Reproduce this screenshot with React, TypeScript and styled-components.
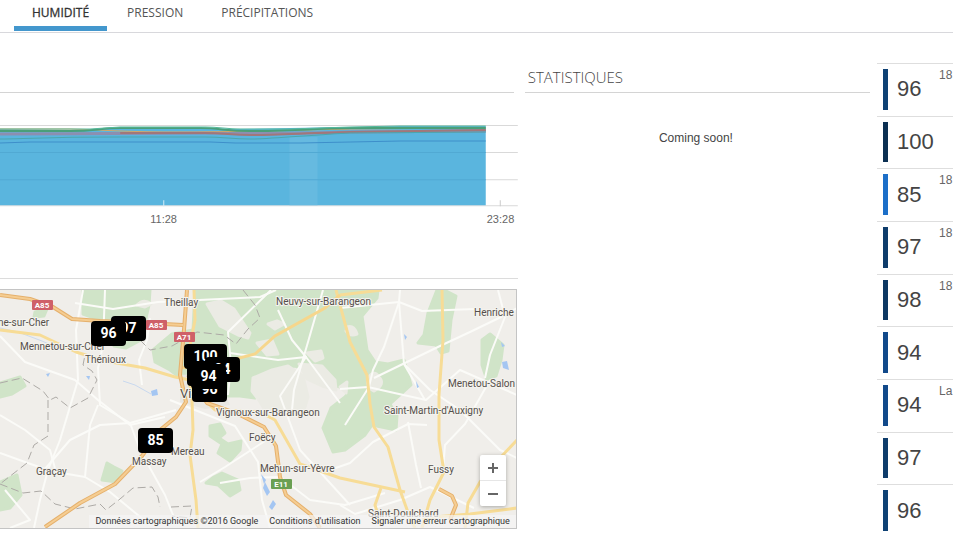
import React, { useState } from "react";
import styled, { createGlobalStyle } from "styled-components";

const GlobalStyle = createGlobalStyle`
  * { box-sizing: border-box; }
  body {
    margin: 0;
    background: #fff;
    color: #444;
    font-family: "Liberation Sans", Arial, sans-serif;
    font-size: 12px;
    overflow: hidden;
  }
`;

const TabBar = styled.nav`
  display: flex;
  gap: 2px;
  height: 33px;
  padding-left: 14px;
  border-bottom: 1px solid #d8d8dc;
`;

const Tab = styled.button<{ $active: boolean }>`
  height: 31px;
  padding: 0 18px;
  border: 0;
  border-bottom: ${(p) => (p.$active ? "5px solid #4397cd" : "5px solid transparent")};
  background: none;
  color: ${(p) => (p.$active ? "#333" : "#555")};
  font: 12px/26px "Open Sans", sans-serif;
  -webkit-text-stroke: ${(p) => (p.$active ? "0.3px #333" : "0")};
`;

const Page = styled.main`
  display: grid;
  grid-template-columns: minmax(0, 3fr) minmax(0, 2fr) 76px;
  column-gap: 7px;
  align-items: start;
`;

const ChartPanel = styled.section`
  border-bottom: 1px solid #dcdcdc;
  padding-bottom: 49px;
`;

const PanelHeader = styled.header`
  height: 60px;
  padding: 32px 3px 0;
  border-bottom: 1px solid #d4d4d4;
`;

const ChartHeader = styled(PanelHeader)`
  margin-right: 4px;
`;

const Title = styled.h2`
  margin: 0;
  color: #444;
  font: 300 15px/24px "Open Sans", sans-serif;
`;

const ChartSvg = styled.svg`
  display: block;
  width: 100%;
  height: 136px;
  text {
    font: 11px "Liberation Sans", Arial, sans-serif;
    fill: #666;
  }
`;

const Notice = styled.p`
  margin: 36px 3px 0 0;
  text-align: center;
  line-height: 18px;
`;

const MapFrame = styled.section`
  position: relative;
  height: 240px;
  margin: 10px 1px 0 0;
  overflow: hidden;
  border: 1px solid #c4c4c4;
  border-left: 0;
  background: #f0eeea;
`;

const MapSvg = styled.svg`
  display: block;
  width: 100%;
  height: 238px;
`;

const Marker = styled.button<{ $x: number; $y: number; $wide?: boolean }>`
  position: absolute;
  left: ${(p) => p.$x}px;
  top: ${(p) => p.$y}px;
  width: ${(p) => (p.$wide ? 43 : 35)}px;
  height: 25px;
  padding: 0;
  border: 0;
  border-radius: 4px;
  background: #000;
  color: #fff;
  font: 700 14px/25px Roboto, sans-serif;
  text-align: center;
`;

const ZoomControl = styled.div`
  position: absolute;
  right: 10px;
  bottom: 22px;
  display: grid;
  width: 26px;
  border-radius: 2px;
  background: #fff;
  box-shadow: 0 1px 4px rgba(0, 0, 0, 0.3);
`;

const ZoomButton = styled.button`
  display: grid;
  place-items: center;
  height: 25px;
  padding: 0;
  border: 0;
  background: none;
  & + & {
    border-top: 1px solid #e6e6e6;
    height: 26px;
  }
`;

const Credits = styled.footer`
  position: absolute;
  right: 0;
  bottom: 0;
  display: flex;
  gap: 11px;
  padding: 0 6px;
  background: rgba(245, 245, 245, 0.7);
  color: #333;
  font: 9px/13px Roboto, sans-serif;
  white-space: nowrap;
`;

const CreditLink = styled.a`
  color: inherit;
  text-decoration: none;
`;

const StationList = styled.ul`
  display: grid;
  grid-auto-rows: 1fr;
  height: calc(100vh - 62px);
  min-height: 474px;
  margin: 30px 0 0;
  padding: 0;
  list-style: none;
`;

const Station = styled.li`
  display: grid;
  grid-template-columns: 5px 51px auto;
  padding: 5px 0 6px 6px;
  overflow: hidden;
  border-top: 1px solid #dedede;
`;

const Level = styled.span<{ $color: string }>`
  background: ${(p) => p.$color};
`;

const Reading = styled.strong`
  align-self: center;
  padding-left: 9px;
  color: #444;
  font-size: 22px;
  font-weight: 400;
  line-height: 24px;
`;

const Note = styled.span`
  color: #666;
  font-size: 12px;
  line-height: 13px;
`;

const tabs = ["HUMIDITÉ", "PRESSION", "PRÉCIPITATIONS"];

const stations = [
  { value: 96, color: "#0e4174", note: "18" },
  { value: 100, color: "#0b2f52", note: "" },
  { value: 85, color: "#1c6fc8", note: "18" },
  { value: 97, color: "#0e3c6b", note: "18" },
  { value: 98, color: "#0d3863", note: "18" },
  { value: 94, color: "#11498a", note: "" },
  { value: 94, color: "#11498a", note: "La" },
  { value: 97, color: "#0e3c6b", note: "" },
  { value: 96, color: "#0e4174", note: "" },
];

const markers = [
  { value: 97, x: 111, y: 26 },
  { value: 96, x: 91, y: 31 },
  { value: 96, x: 192, y: 87 },
  { value: 100, x: 184, y: 54, wide: true },
  { value: 97, x: 187, y: 71 },
  { value: 94, x: 205, y: 67 },
  { value: 94, x: 191, y: 74 },
  { value: 85, x: 138, y: 138 },
];

const towns: [number, number, string][] = [
  [164, 306, "Theillay"],
  [276, 305, "Neuvy-sur-Barangeon"],
  [474, 316, "Henriche"],
  [-2, 326, "ne-sur-Cher"],
  [20, 350, "Mennetou-sur-Cher"],
  [85, 363, "Thénioux"],
  [448, 387, "Menetou-Salon"],
  [384, 414, "Saint-Martin-d'Auxigny"],
  [216, 416, "Vignoux-sur-Barangeon"],
  [249, 441, "Foëcy"],
  [171, 455, "Mereau"],
  [132, 465, "Massay"],
  [36, 475, "Graçay"],
  [260, 472, "Mehun-sur-Yèvre"],
  [428, 473, "Fussy"],
  [368, 517, "Saint-Doulchard"],
];

const forests = [
  "M83 290H150L149 305L141 340L126 348L114 346L105 322L83 314Z",
  "M195 290H378L377 298L362 316L367 350L375 362L388 364L404 360L411 385L390 404L397 416L396 430L372 425L365 435L345 450L333 452L323 428L331 408L345 397L350 390L330 384L312 372L295 366L271 370L255 380L250 392L255 398L240 396L228 396L190 385L170 370L155 362L153 350L172 334L193 330Z",
  "M437 290L444 290L456 296L451 320L448 351L441 353L436 345L418 343L424 335L428 313Z",
  "M482 340L490 334L503 345L501 360L496 376L487 380L482 365Z",
  "M107 463L114 467L122 471L117 482L102 480Z",
  "M0 482L17 475L21 495L10 508L0 510Z",
  "M0 383L20 377L25 386L12 394L0 397Z",
  "M35 312L47 309L44 316L34 317Z",
  "M210 426L220 424L225 433L219 438L228 444L241 441L240 450L230 461L218 453L222 444L210 436Z",
  "M214 477L222 473L238 480L240 490L230 496L218 485L206 483Z",
];

const clearings = [
  "M207 304L221 301L234 309L250 333L248 338L238 335L220 326Z",
  "M268 324L277 321L284 324L275 329Z",
  "M257 343L272 340L278 354L267 355Z",
  "M137 305Q144 298 151 304L145 307Z",
  "M253 378L272 370L288 366L303 376L308 397L304 410L265 410L258 399L252 391Z",
  "M307 353L321 351L323 358L315 361Z",
  "M299 364L322 366L335 380L336 390L322 386L307 379Z",
  "M340 387L347 382L346 393Z",
  "M347 327Q354 325 357 334Q350 337 346 331Z",
  "M368 378Q374 369 379 377Q386 384 374 391Q366 388 368 378Z",
];

const localRoads = [
  "M83 290L76 330L78 380L60 440L48 470L40 500L34 528",
  "M105 290L103 345L98 368L100 405L130 423L140 450",
  "M0 336L25 362L50 371L75 380L98 400L130 425L165 417",
  "M0 415L25 430L50 450L56 472L85 477L110 492L150 525",
  "M0 453L25 462L45 469L70 440L100 425L130 423L176 410",
  "M85 477L90 425L98 405",
  "M140 450L165 495L175 520",
  "M75 303L113 309L158 302L260 297L276 290",
  "M150 318L147 340L139 360L142 385",
  "M271 290L228 332L231 365L228 395",
  "M323 290L308 342L294 390L292 410",
  "M278 310L292 340L306 357L280 396L300 450L350 505",
  "M230 353L278 360L306 357L340 403",
  "M170 400L235 426L258 462L262 500L270 528",
  "M200 482L225 467L265 441",
  "M220 483L250 478L280 477",
  "M400 290L399 302L384 347L373 370L369 387L345 425",
  "M340 308L399 302L422 311L475 309",
  "M399 302L404 364L425 400",
  "M374 378L440 346L470 332L501 317L517 308",
  "M498 290L505 317L490 355L485 378",
  "M404 364L430 390L460 410L500 450L517 458",
  "M340 389L368 387L390 392L426 400L460 370L517 395",
  "M427 425L408 424L373 442L350 463L330 470",
  "M408 422L416 465L421 488",
  "M490 380L465 424L445 445L443 470",
  "M340 505L355 514L400 500L430 487L474 508",
  "M5 490L30 520L10 528",
  "M280 477L310 500L345 505L385 493",
];

const mainRoads = [
  "M0 330L40 335L76 352L105 361L145 368L175 377L190 380",
  "M194 290L195 320L188 355L192 400L193 430L190 455L196 500L198 528",
  "M340 295L382 290",
  "M336 290L350 342L367 375L370 404L374 427L388 447L400 490L410 518L415 528",
  "M442 290L443 340L439 395L439 440L444 472L430 500L422 528",
  "M189 385L215 410L260 412L275 420L300 464L340 478L405 492",
  "M381 488L375 505L381 525",
  "M517 440L500 458L480 482L468 503L465 528",
  "M422 518L470 514L517 508",
];

const motorways =
  "M0 295L30 299L53 307L72 319L100 321L145 323L183 325M187 290L184 330L180 375L186 402L176 417L160 430L142 456L115 484L80 503L45 527M188 375L207 403L238 414L264 427L276 446L280 477L286 495L310 514L320 528M439 489L452 496L456 505L450 520";

const borders = [
  "M243 290L255 305L260 318L248 329L236 344L224 335L197 332L172 346L150 350L140 340",
  "M0 383L22 378L43 391L50 400L56 397L70 408L88 398L97 380L92 371L83 365L85 355",
  "M48 400L48 436L34 445L27 463L0 484",
  "M0 484L23 493L41 491L55 504L75 509L100 504L106 510L120 499L133 488L152 487L158 497L160 507",
  "M171 507L192 506L190 518L172 516",
];

const lakes = [
  "M151 391L157 389L158 395L152 396Z",
  "M86 376L90 376L89 380Z",
  "M46 374L50 373L48 377Z",
  "M404 334L407 337L405 340Z",
  "M502 362L507 361L509 370L503 368Z",
  "M501 342L505 346L502 347Z",
  "M261 474L266 480L264 484Z",
  "M265 482L270 492L267 496L263 488Z",
  "M273 500L276 504L272 510L269 507Z",
  "M416 381L419 387L417 388Z",
];

const shields: [number, number, string, string][] = [
  [32, 300, "A85", "#cf6068"],
  [146, 320, "A85", "#cf6068"],
  [174, 332, "A71", "#cf6068"],
  [271, 479, "E11", "#6a9f52"],
];

function HumidityChart() {
  return (
    <ChartSvg viewBox="0 93 517 136" preserveAspectRatio="xMinYMin slice" role="img" aria-label="Humidité">
      <path d="M0 125.500H517M0 152.500H517M0 179.500H517M0 205.500H517" stroke="#d9d9d9" fill="none" />
      <path d="M0 129L70 130L120 128L205 128L235 129L290 128L350 127L400 126L485 126V205H0Z" fill="#5ab5de" />
      <rect x="289" y="137" width="28" height="68" fill="#66bae0" />
      <path d="M0 152.500H485M0 179.500H485" stroke="#51a9d3" fill="none" />
      <g fill="none">
        <path d="M0 134C70 134 120 133 205 133S290 134 350 132L485 131" stroke="#8c8fb0" strokeWidth="3" />
        <path d="M0 129L70 129C110 130 130 132 180 132S300 130 350 129L485 128" stroke="#d4a765" strokeWidth="1" />
        <path d="M0 131H70C95 131 100 128 120 128H200C220 128 225 131 250 131S310 129 350 128L485 128" stroke="#4a9f79" strokeWidth="2" />
        <path d="M120 133H205C225 133 230 135 250 135S310 133 350 132L485 130" stroke="#a1777a" strokeWidth="2" />
        <path d="M0 139C40 138 60 137 120 137H205C225 137 230 139 250 139S310 135 350 133L485 132" stroke="#4ba6ad" strokeWidth="1" />
        <path d="M0 129H90L120 127H205C220 127 225 129 240 129H290L350 127L400 126H485" stroke="#56b79b" strokeWidth="1" />
        <path d="M0 143L30 142H210L235 143H300L350 142L400 141H485" stroke="#3e8fca" strokeWidth="1" />
      </g>
      <path d="M163.500 200V206" stroke="#d5edf7" />
      <path d="M499.500 200V206" stroke="#ccc" />
      <text x="150" y="223">11:28</text>
      <text x="486" y="223">23:28</text>
    </ChartSvg>
  );
}

function Terrain() {
  return (
    <MapSvg viewBox="0 290 517 238" preserveAspectRatio="xMinYMin slice" role="img" aria-label="Carte des stations">
      <rect y="290" width="517" height="238" fill="#f0eeea" />
      <g fill="#d0e4c8" stroke="#d0e4c8" strokeWidth="3" strokeLinejoin="round">
        {forests.map((d) => <path key={d} d={d} />)}
      </g>
      <g fill="#ebebe4" stroke="#ebebe4" strokeWidth="3" strokeLinejoin="round">
        {clearings.map((d) => <path key={d} d={d} />)}
      </g>
      <path d="M180 375L199 374L225 394L230 405L205 409L180 402Z" fill="#e8e7e2" />
      <g fill="none" stroke="#fbfbf8" strokeWidth="2" strokeLinejoin="round">
        {localRoads.map((d) => <path key={d} d={d} />)}
      </g>
      <path d="M0 328L18 332L42 341L60 349M123 381L135 385L151 394" fill="none" stroke="#c9d9ef" strokeWidth="1" />
      <g fill="#a4c6f2">{lakes.map((d) => <path key={d} d={d} />)}</g>
      <g fill="none" stroke="#adaaa6" strokeWidth="1" strokeDasharray="8 4">
        {borders.map((d) => <path key={d} d={d} />)}
      </g>
      <g fill="none" stroke="#f7dc96" strokeWidth="3" strokeLinejoin="round">
        {mainRoads.map((d) => <path key={d} d={d} />)}
      </g>
      <path d="M180 368L217 364L255 354L275 336L325 308L340 295" fill="none" stroke="#f6d68c" strokeWidth="3" />
      <g fill="none" strokeLinejoin="round">
        <path d={motorways} stroke="#e5b06c" strokeWidth="4" />
        <path d={motorways} stroke="#f5cd92" strokeWidth="2" />
      </g>
      {shields.map(([x, y, label, fill]) => (
        <g key={`${label}${x}`}>
          <rect x={x} y={y} width="21" height="10" rx="1" fill={fill} />
          <text x={x + 10} y={y + 8} textAnchor="middle" fill="#fff" fontFamily="Roboto, sans-serif" fontSize="8" fontWeight="700">{label}</text>
        </g>
      ))}
      <g fill="#554f4b" stroke="#f4f3ee" strokeWidth="2" paintOrder="stroke" fontFamily="Roboto, sans-serif" fontSize="10">
        {towns.map(([x, y, name]) => <text key={name} x={x} y={y}>{name}</text>)}
        <text x="180" y="398" fontSize="13">Vierzon</text>
      </g>
    </MapSvg>
  );
}

export default function App() {
  const [active, setActive] = useState(tabs[0]);
  return (
    <>
      <GlobalStyle />
      <TabBar>
        {tabs.map((tab) => (
          <Tab key={tab} $active={tab === active} onClick={() => setActive(tab)}>{tab}</Tab>
        ))}
      </TabBar>
      <Page>
        <div>
          <ChartPanel>
            <ChartHeader />
            <HumidityChart />
          </ChartPanel>
          <MapFrame>
            <Terrain />
            {markers.map((m) => (
              <Marker key={`${m.x}-${m.y}`} $x={m.x} $y={m.y} $wide={m.wide}>{m.value}</Marker>
            ))}
            <ZoomControl>
              <ZoomButton aria-label="Zoom avant">
                <svg width="10" height="10" viewBox="0 0 10 10"><path d="M5 0V10M0 5H10" stroke="#666" strokeWidth="2" /></svg>
              </ZoomButton>
              <ZoomButton aria-label="Zoom arrière">
                <svg width="10" height="10" viewBox="0 0 10 10"><path d="M0 5H10" stroke="#666" strokeWidth="2" /></svg>
              </ZoomButton>
            </ZoomControl>
            <Credits>
              <span>Données cartographiques ©2016 Google</span>
              <CreditLink href="#conditions">Conditions d'utilisation</CreditLink>
              <CreditLink href="#signaler">Signaler une erreur cartographique</CreditLink>
            </Credits>
          </MapFrame>
        </div>
        <section>
          <PanelHeader><Title>STATISTIQUES</Title></PanelHeader>
          <Notice>Coming soon!</Notice>
        </section>
        <StationList>
          {stations.map((s, i) => (
            <Station key={i}>
              <Level $color={s.color} />
              <Reading>{s.value}</Reading>
              <Note>{s.note}</Note>
            </Station>
          ))}
        </StationList>
      </Page>
    </>
  );
}
